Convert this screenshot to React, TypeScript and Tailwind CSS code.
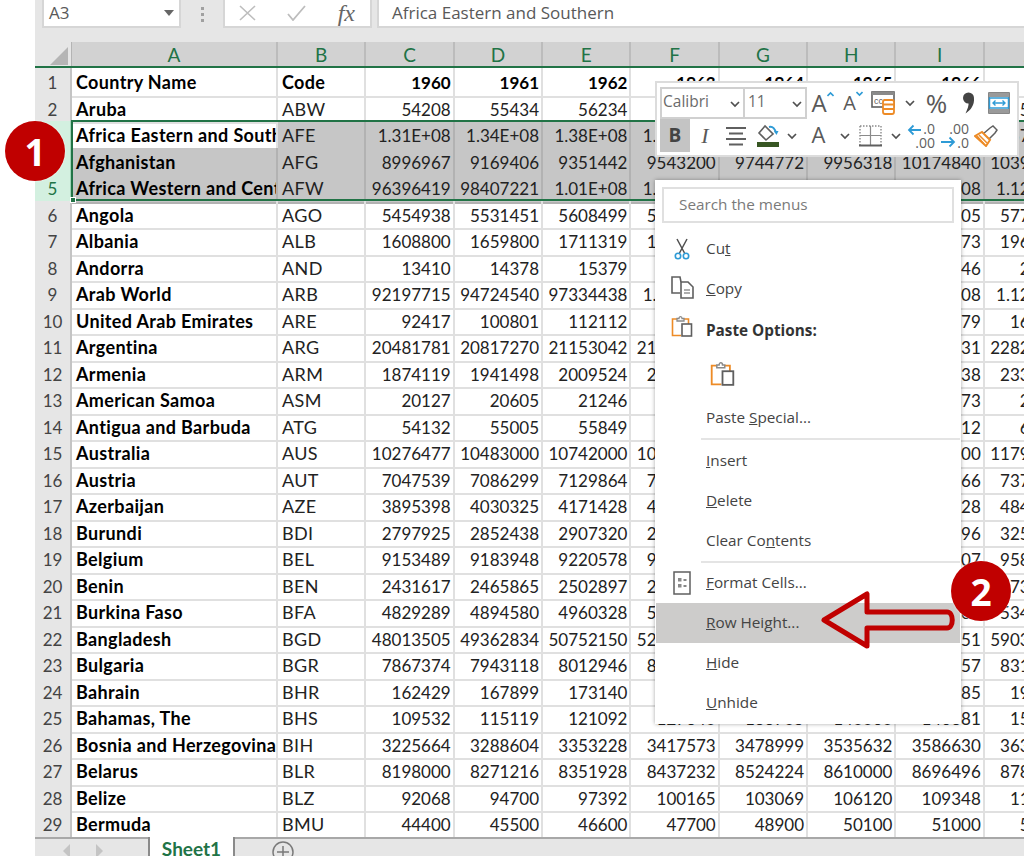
import type { ReactNode } from "react";

const GRID_COLS = "grid grid-cols-[37px_206px_repeat(9,88.35px)]";

const COLUMNS = ["A", "B", "C", "D", "E", "F", "G", "H", "I", "J"];

const ROWS: string[][] = [
  ["Country Name", "Code", "1960", "1961", "1962", "1963", "1964", "1965", "1966", "1967"],
  ["Aruba", "ABW", "54208", "55434", "56234", "56699", "57029", "57357", "57702", "58044"],
  ["Africa Eastern and Southern", "AFE", "1.31E+08", "1.34E+08", "1.38E+08", "1.41E+08", "1.45E+08", "1.49E+08", "1.53E+08", "1.57E+08"],
  ["Afghanistan", "AFG", "8996967", "9169406", "9351442", "9543200", "9744772", "9956318", "10174840", "10399936"],
  ["Africa Western and Central", "AFW", "96396419", "98407221", "1.01E+08", "1.03E+08", "1.05E+08", "1.07E+08", "1.10E+08", "1.12E+08"],
  ["Angola", "AGO", "5454938", "5531451", "5608499", "5679409", "5734995", "5770573", "5781305", "5774243"],
  ["Albania", "ALB", "1608800", "1659800", "1711319", "1762621", "1814135", "1864791", "1914573", "1965598"],
  ["Andorra", "AND", "13410", "14378", "15379", "16407", "17466", "18542", "19646", "20760"],
  ["Arab World", "ARB", "92197715", "94724540", "97334438", "1.00E+08", "1.03E+08", "1.06E+08", "1.09E+08", "1.12E+08"],
  ["United Arab Emirates", "ARE", "92417", "100801", "112112", "125130", "138039", "149857", "159979", "169768"],
  ["Argentina", "ARG", "20481781", "20817270", "21153042", "21488916", "21824427", "22159644", "22494031", "22828872"],
  ["Armenia", "ARM", "1874119", "1941498", "2009524", "2077584", "2145004", "2211316", "2276038", "2339133"],
  ["American Samoa", "ASM", "20127", "20605", "21246", "22029", "22850", "23675", "24473", "25235"],
  ["Antigua and Barbuda", "ATG", "54132", "55005", "55849", "56701", "57641", "58699", "59912", "61240"],
  ["Australia", "AUS", "10276477", "10483000", "10742000", "10950000", "11167000", "11388000", "11651000", "11799000"],
  ["Austria", "AUT", "7047539", "7086299", "7129864", "7175811", "7223801", "7270889", "7322066", "7376998"],
  ["Azerbaijan", "AZE", "3895398", "4030325", "4171428", "4315127", "4456691", "4592601", "4721528", "4843872"],
  ["Burundi", "BDI", "2797925", "2852438", "2907320", "2964416", "3026292", "3094378", "3170496", "3253215"],
  ["Belgium", "BEL", "9153489", "9183948", "9220578", "9289770", "9378113", "9463667", "9527807", "9580991"],
  ["Benin", "BEN", "2431617", "2465865", "2502897", "2542864", "2585961", "2632361", "2682159", "2735308"],
  ["Burkina Faso", "BFA", "4829289", "4894580", "4960328", "5027811", "5098891", "5174874", "5256360", "5343025"],
  ["Bangladesh", "BGD", "48013505", "49362834", "50752150", "52202008", "53741721", "55385114", "57157651", "59034250"],
  ["Bulgaria", "BGR", "7867374", "7943118", "8012946", "8078145", "8144340", "8204168", "8258057", "8310226"],
  ["Bahrain", "BHR", "162429", "167899", "173140", "178142", "182888", "187432", "191785", "196060"],
  ["Bahamas, The", "BHS", "109532", "115119", "121092", "127340", "133705", "140060", "146381", "152621"],
  ["Bosnia and Herzegovina", "BIH", "3225664", "3288604", "3353228", "3417573", "3478999", "3535632", "3586630", "3632678"],
  ["Belarus", "BLR", "8198000", "8271216", "8351928", "8437232", "8524224", "8610000", "8696496", "8785648"],
  ["Belize", "BLZ", "92068", "94700", "97392", "100165", "103069", "106120", "109348", "112707"],
  ["Bermuda", "BMU", "44400", "45500", "46600", "47700", "48900", "50100", "51000", "52000"],
];

const Grey = "#5f5f5f";
const Blue = "#2e9bd6";
const Orange = "#ed8b26";

function Chevron({ size = 10 }: { size?: number }) {
  return (
    <svg width={size} height={size} viewBox="0 0 10 10">
      <path d="M1 3 L5 7 L9 3" fill="none" stroke="#505050" strokeWidth="1.7" />
    </svg>
  );
}

function Slot({ w, children }: { w: string; children: ReactNode }) {
  return <div className={`${w} h-full flex items-center justify-center shrink-0`}>{children}</div>;
}

function AccountingIcon() {
  return (
    <svg width="26" height="24" viewBox="0 0 26 24">
      <rect x="1" y="1" width="22" height="15" fill="none" stroke={Grey} strokeWidth="1.6" />
      <rect x="1" y="1" width="22" height="3" fill="#8a8a8a" />
      <text x="3" y="13" fontFamily="Liberation Sans, sans-serif" fontSize="9" fill={Grey}>ccc</text>
      <rect x="12" y="9" width="11" height="14" rx="2" fill="#fff" stroke={Orange} strokeWidth="1.8" />
      <path d="M12 13.5 H23 M12 18 H23" stroke={Orange} strokeWidth="1.8" />
    </svg>
  );
}

function CommaIcon() {
  return (
    <svg width="13" height="22" viewBox="0 0 13 22">
      <circle cx="6.5" cy="6" r="5.5" fill="#444444" />
      <path d="M12 6 C12.5 13 9 18 3.5 21.5 C5.5 17 7 13.5 6.5 10 Z" fill="#444444" />
    </svg>
  );
}

function WrapIcon() {
  return (
    <svg width="22" height="22" viewBox="0 0 22 22">
      <rect x="1" y="1" width="20" height="20" fill="#fff" stroke={Grey} strokeWidth="1.5" />
      <rect x="1" y="1" width="20" height="4" fill="#9a9a9a" />
      <rect x="1" y="17" width="20" height="4" fill="#9a9a9a" />
      <rect x="1.5" y="6" width="19" height="10" fill="#fff" stroke={Blue} strokeWidth="1.5" />
      <path d="M5 11 H17 M7.5 8.5 L5 11 L7.5 13.5 M14.5 8.5 L17 11 L14.5 13.5" fill="none" stroke={Blue} strokeWidth="1.4" />
    </svg>
  );
}

function AlignIcon() {
  return (
    <svg width="22" height="22" viewBox="0 0 22 22">
      <path d="M1 3 H21 M4 8.5 H18 M1 14 H21 M4 19.5 H18" stroke={Grey} strokeWidth="1.8" />
    </svg>
  );
}

function FillIcon() {
  return (
    <svg width="24" height="24" viewBox="0 0 24 24">
      <path d="M9 2 L3 9 L10 16 L17 10 Z" fill="#fff" stroke={Grey} strokeWidth="1.6" />
      <path d="M13 3 C17 2 19 5 20 9" fill="none" stroke={Blue} strokeWidth="2" />
      <path d="M18 7 L20.5 11 L22.5 7 Z" fill={Blue} />
      <rect x="1" y="18" width="22" height="5" fill="#375623" />
    </svg>
  );
}

function BordersIcon() {
  return (
    <svg width="23" height="22" viewBox="0 0 23 22">
      <path d="M1 1 H22 M1 1 V20 M22 1 V20" stroke="#8a8a8a" strokeWidth="1.4" strokeDasharray="1.5 1.5" fill="none" />
      <path d="M11.5 1 V20 M1 10.5 H22" stroke="#8a8a8a" strokeWidth="1.2" />
      <path d="M0 20.5 H23" stroke={Grey} strokeWidth="2" />
    </svg>
  );
}

function DecimalIcon({ top, bottom, flip }: { top: string; bottom: string; flip?: boolean }) {
  return (
    <svg width="30" height="26" viewBox="0 0 30 26" fontFamily="Open Sans, sans-serif" fontSize="14" fill={Grey}>
      <text x="29" y="11" textAnchor="end">{top}</text>
      <text x="29" y="25" textAnchor="end">{bottom}</text>
      {flip ? (
        <path d="M1 19 H14 M9.5 14.5 L14 19 L9.5 23.5" fill="none" stroke={Blue} strokeWidth="1.8" />
      ) : (
        <path d="M15 7 H3 M7.5 2.5 L3 7 L7.5 11.5" fill="none" stroke={Blue} strokeWidth="1.8" />
      )}
    </svg>
  );
}

function BrushIcon() {
  return (
    <svg width="24" height="22" viewBox="0 0 24 22">
      <path d="M9 9 L16 3 L19 1 L23 5 L21 8 L15 14 Z" fill="#fff" stroke={Grey} strokeWidth="1.5" />
      <path d="M8 7 L16 15 L12 21 L1 11 Z" fill="#fff" stroke={Orange} strokeWidth="2" />
      <path d="M5 10 L13 18 M3 11 L10 19" stroke={Orange} strokeWidth="1.5" />
    </svg>
  );
}

function ScissorsIcon() {
  return (
    <svg width="16" height="22" viewBox="0 0 16 22">
      <path d="M3 1 L10.5 15 M13 1 L5.5 15" fill="none" stroke="#505050" strokeWidth="1.5" />
      <circle cx="4" cy="18" r="2.7" fill="none" stroke={Blue} strokeWidth="1.6" />
      <circle cx="12" cy="18" r="2.7" fill="none" stroke={Blue} strokeWidth="1.6" />
    </svg>
  );
}

function CopyIcon() {
  return (
    <svg width="23" height="23" viewBox="0 0 23 23">
      <path d="M9 17 H1 V1 H9 L10 6" fill="none" stroke={Grey} strokeWidth="1.6" />
      <path d="M10 6 H17 L22 11 V22 H10 Z" fill="#fff" stroke={Grey} strokeWidth="1.6" />
      <path d="M13 14 H19 M13 17 H19" stroke={Grey} strokeWidth="1.2" />
    </svg>
  );
}

function PasteIcon({ size = 22 }: { size?: number }) {
  return (
    <svg width={size} height={size} viewBox="0 0 22 22">
      <path d="M6 4 H1.5 V20.5 H10" fill="none" stroke={Orange} strokeWidth="1.6" />
      <path d="M13 4 H17.5 V9" fill="none" stroke={Orange} strokeWidth="1.6" />
      <path d="M6 6 V3.5 H8 C8 1 11 1 11 3.5 H13 V6 Z" fill="#fff" stroke="#8a8a8a" strokeWidth="1.3" />
      <rect x="11" y="9" width="9.5" height="12" fill="#fff" stroke={Grey} strokeWidth="1.6" />
    </svg>
  );
}

function FormatCellsIcon() {
  return (
    <svg width="18" height="24" viewBox="0 0 18 24">
      <rect x="1" y="1" width="16" height="22" fill="#fff" stroke={Grey} strokeWidth="1.5" />
      <rect x="5" y="7" width="3.5" height="3.5" fill="#8a8a8a" />
      <rect x="5" y="13" width="3.5" height="3.5" fill="#8a8a8a" />
      <path d="M10.5 9 H13.5 M10.5 15 H13.5" stroke={Grey} strokeWidth="1.3" />
    </svg>
  );
}

function MiniToolbar() {
  const Ui = "font-['Open_Sans',sans-serif]";
  return (
    <div className="absolute left-[655px] top-[81px] w-[364px] h-[76px] bg-white border-2 border-[#dcdcdc] pl-[3px] pt-[4px] flex flex-col">
      <div className="flex h-[32px] text-[#595959]">
        <div className={`${Ui} w-[85px] h-full border-2 border-[#d0d0d0] flex items-center justify-between pl-[1px] pr-[3px] pb-[3px] text-[15.5px] text-[#6b6b6b]`}>
          Calibri
          <div className="mt-[4px]"><Chevron /></div>
        </div>
        <div className={`${Ui} w-[62px] h-full border-2 border-l-0 border-[#d0d0d0] flex items-center justify-between pl-[3px] pr-[3px] pb-[3px] text-[15.5px] text-[#6b6b6b]`}>
          11
          <div className="mt-[4px]"><Chevron /></div>
        </div>
        <Slot w="w-[31px]">
          <span className={`${Ui} text-[24px] leading-none`}>A</span>
          <svg width="7" height="12" viewBox="0 0 7 12" className="mb-[12px]"><path d="M0.5 5 L3.5 2 L6.5 5" fill="none" stroke={Blue} strokeWidth="1.6" /></svg>
        </Slot>
        <Slot w="w-[30px]">
          <span className={`${Ui} text-[20px] leading-none`}>A</span>
          <svg width="7" height="12" viewBox="0 0 7 12" className="mb-[14px]"><path d="M0.5 2 L3.5 5 L6.5 2" fill="none" stroke={Blue} strokeWidth="1.6" /></svg>
        </Slot>
        <Slot w="w-[32px]"><AccountingIcon /></Slot>
        <Slot w="w-[19px]"><Chevron /></Slot>
        <Slot w="w-[35px]"><span className={`${Ui} text-[26px] leading-none`}>%</span></Slot>
        <Slot w="w-[29px]"><CommaIcon /></Slot>
        <Slot w="w-[32px]"><WrapIcon /></Slot>
      </div>
      <div className="flex h-[33px] text-[#595959]">
        <Slot w="w-[30px] bg-[#c4c4c4]"><span className={`${Ui} font-bold text-[19px] text-[#444444]`}>B</span></Slot>
        <Slot w="w-[30px]"><span className="font-['Liberation_Serif',serif] italic text-[22px]">I</span></Slot>
        <Slot w="w-[32px]"><AlignIcon /></Slot>
        <Slot w="w-[31px]"><FillIcon /></Slot>
        <Slot w="w-[18px]"><Chevron /></Slot>
        <Slot w="w-[35px]"><span className={`${Ui} text-[22px] leading-none mb-[3px]`}>A</span></Slot>
        <Slot w="w-[17px]"><Chevron /></Slot>
        <Slot w="w-[34px]"><BordersIcon /></Slot>
        <Slot w="w-[17px]"><Chevron /></Slot>
        <Slot w="w-[34px]"><DecimalIcon top=".0" bottom=".00" /></Slot>
        <Slot w="w-[33px]"><DecimalIcon top=".00" bottom=".0" flip /></Slot>
        <Slot w="w-[30px]"><BrushIcon /></Slot>
      </div>
    </div>
  );
}

function MenuItem({ icon, hot, children }: { icon?: ReactNode; hot?: boolean; children: ReactNode }) {
  return (
    <div className={`flex items-center h-[40px] ${hot ? "bg-[#cdcccb]" : ""}`}>
      <div className="w-[50px] flex justify-center pl-[2px] shrink-0">{icon}</div>
      <div className="mb-[2px]">{children}</div>
    </div>
  );
}

function ContextMenu() {
  return (
    <div className="absolute left-[655px] top-[180px] w-[306px] bg-white shadow-[0_0_4px_rgba(0,0,0,0.35)] pt-[7px] pb-[1px] px-px font-['Open_Sans',sans-serif] text-[15.3px] text-[#444444]">
      <div className="mx-[6px] h-[36px] border-2 border-[#e0e0e0] flex items-center pl-[15px] pb-[2px] text-[#7a7a7a]">
        Search the menus
      </div>
      <div className="h-[6px]" />
      <MenuItem icon={<ScissorsIcon />}>Cu<u>t</u></MenuItem>
      <MenuItem icon={<div className="mb-[3px]"><CopyIcon /></div>}><u>C</u>opy</MenuItem>
      <div className="h-[2px]" />
      <MenuItem icon={<div className="mb-[10px]"><PasteIcon /></div>}>
        <span className="font-bold text-[#333333]">Paste Options:</span>
      </MenuItem>
      <div className="h-[44px] pl-[54px] flex items-center"><PasteIcon size={25} /></div>
      <div className="h-[3px]" />
      <MenuItem>Paste <u>S</u>pecial...</MenuItem>
      <div className="ml-[45px] h-[2px] bg-[#e4e4e4]" />
      <div className="h-[1px]" />
      <MenuItem><u>I</u>nsert</MenuItem>
      <MenuItem><u>D</u>elete</MenuItem>
      <MenuItem>Clear Co<u>n</u>tents</MenuItem>
      <div className="ml-[45px] h-[2px] bg-[#e4e4e4]" />
      <MenuItem icon={<FormatCellsIcon />}><u>F</u>ormat Cells...</MenuItem>
      <MenuItem hot><u>R</u>ow Height...</MenuItem>
      <MenuItem><u>H</u>ide</MenuItem>
      <MenuItem><u>U</u>nhide</MenuItem>
    </div>
  );
}

function Badge({ className, children }: { className: string; children: ReactNode }) {
  return (
    <div className={`absolute w-[60px] h-[60px] rounded-full bg-[#c00000] text-white flex items-center justify-center font-['Open_Sans',sans-serif] font-bold text-[37px] leading-none shadow-[0_0_2px_rgba(255,255,255,0.9)] ${className}`}>
      {children}
    </div>
  );
}

export default function App() {
  return (
    <div className="relative w-[1024px] h-[856px] overflow-hidden bg-white pl-[35px] flex flex-col font-['Lato',sans-serif]">
      <div className="bg-[#e6e6e6] h-[42px] shrink-0 flex items-start pl-[7px] pr-0 font-['Open_Sans',sans-serif] text-[#595959] text-[17px]">
        <div className="w-[139px] h-[28px] bg-white border-b-2 border-x-2 border-[#d6d6d6] flex items-center justify-between px-[5px]">
          A3
          <svg width="10" height="6" viewBox="0 0 10 6"><path d="M0 0 H10 L5 6 Z" fill="#666666" /></svg>
        </div>
        <div className="w-[42px] h-[28px] flex flex-col items-center justify-center gap-[3px]">
          <span className="w-[3px] h-[3px] bg-[#a0a0a0]" />
          <span className="w-[3px] h-[3px] bg-[#a0a0a0]" />
          <span className="w-[3px] h-[3px] bg-[#a0a0a0]" />
        </div>
        <div className="w-[149px] h-[28px] bg-white border-b-2 border-x-2 border-[#d6d6d6] flex items-center justify-between pl-[14px] pr-[15px]">
          <svg width="17" height="16" viewBox="0 0 17 16"><path d="M1 1 L16 15 M16 1 L1 15" stroke="#bdbdbd" strokeWidth="1.6" /></svg>
          <svg width="19" height="16" viewBox="0 0 19 16"><path d="M1 9 L6 15 L18 1" fill="none" stroke="#bdbdbd" strokeWidth="1.8" /></svg>
          <span className="font-['Liberation_Serif',serif] italic text-[24px] leading-none text-[#666666]">fx</span>
        </div>
        <div className="ml-[5px] flex-1 h-[28px] bg-white border-b-2 border-l-2 border-[#d6d6d6] flex items-center pl-[13px]">
          Africa Eastern and Southern
        </div>
      </div>

      <div className={`${GRID_COLS} shrink-0 h-[26px] bg-[#d2d2d2] text-[#217346] text-[19px] border-b-2 border-[#217346]`}>
        <div className="bg-[#e6e6e6] border-r border-[#b4b4b4] flex items-end justify-end pr-[3px] pb-[1px]">
          <svg width="18" height="18" viewBox="0 0 18 18"><path d="M18 0 V18 H0 Z" fill="#b5b5b5" /></svg>
        </div>
        {COLUMNS.map((c) => (
          <div key={c} className="border-r-2 border-[#bcbcbc] flex items-center justify-center leading-none">{c}</div>
        ))}
      </div>

      <div className="h-[768.5px] shrink-0 overflow-hidden">
        {ROWS.map((row, i) => {
          const selected = i >= 2 && i <= 4;
          return (
            <div key={i} className={`${GRID_COLS} h-[26.5px] text-[17px] text-[#222222]`}>
              <div className={`flex items-center justify-center pt-[2px] border-b-2 border-r-2 ${selected ? "bg-[#d3f0e0] text-[#217346] border-[#9fd5b7]" : "bg-[#e6e6e6] text-[#444444] border-[#c4c4c4]"}`}>
                {i + 1}
              </div>
              {row.map((cell, j) => {
                const active = i === 2 && j === 0;
                const shaded = selected && !active;
                const numeric = j > 1;
                const bold = j === 0 || i === 0;
                return (
                  <div
                    key={j}
                    className={`flex items-center overflow-hidden whitespace-nowrap pt-[2px] border-r-2 border-b-2 ${shaded ? "bg-[#c6c6c6] border-[#b2b2b2]" : "border-[#e0e0e0]"} ${numeric ? "justify-end pr-[2px]" : "pl-[4px] text-[18px] tracking-[0.35px]"} ${bold ? "font-bold text-black" : ""}`}
                  >
                    {cell}
                  </div>
                );
              })}
            </div>
          );
        })}
      </div>

      <div className="h-[20px] shrink-0 bg-[#e6e6e6] border-t-2 border-[#a8a8a8] flex items-start text-[#217346]">
        <div className="w-[113px] flex gap-[24px] pl-[28px] pt-[5px]">
          <svg width="8" height="14" viewBox="0 0 8 14"><path d="M7 0 L0 7 L7 14 Z" fill="#c4c4c4" /></svg>
          <svg width="8" height="14" viewBox="0 0 8 14"><path d="M1 0 L8 7 L1 14 Z" fill="#c4c4c4" /></svg>
        </div>
        <div className="w-[87px] h-[20px] mt-[-2px] bg-white border-x-2 border-[#8a8a8a] flex items-start justify-center font-bold text-[19px] leading-[23px]">
          Sheet1
        </div>
        <svg width="22" height="22" viewBox="0 0 22 22" className="ml-[37px] mt-[2px]">
          <circle cx="11" cy="11" r="10" fill="none" stroke="#7a7a7a" strokeWidth="1.5" />
          <path d="M11 5 V17 M5 11 H17" stroke="#7a7a7a" strokeWidth="1.5" />
        </svg>
      </div>

      <div className="absolute left-[71px] top-[120px] w-[960px] h-[81px] border-2 border-[#217346]" />
      <div className="absolute left-[70px] top-[197px] w-[6px] h-[6px] bg-[#217346] border border-white" />

      <MiniToolbar />
      <ContextMenu />

      <svg className="absolute left-[820px] top-[590px]" width="136" height="60" viewBox="0 0 136 60">
        <path d="M4 30 L47 4 V22 H127 C134 22 134 38 127 38 H47 V56 Z" fill="none" stroke="#c00000" strokeWidth="5" strokeLinejoin="round" />
      </svg>

      <Badge className="left-[5px] top-[121px]">1</Badge>
      <Badge className="left-[951px] top-[561px]">2</Badge>
    </div>
  );
}
